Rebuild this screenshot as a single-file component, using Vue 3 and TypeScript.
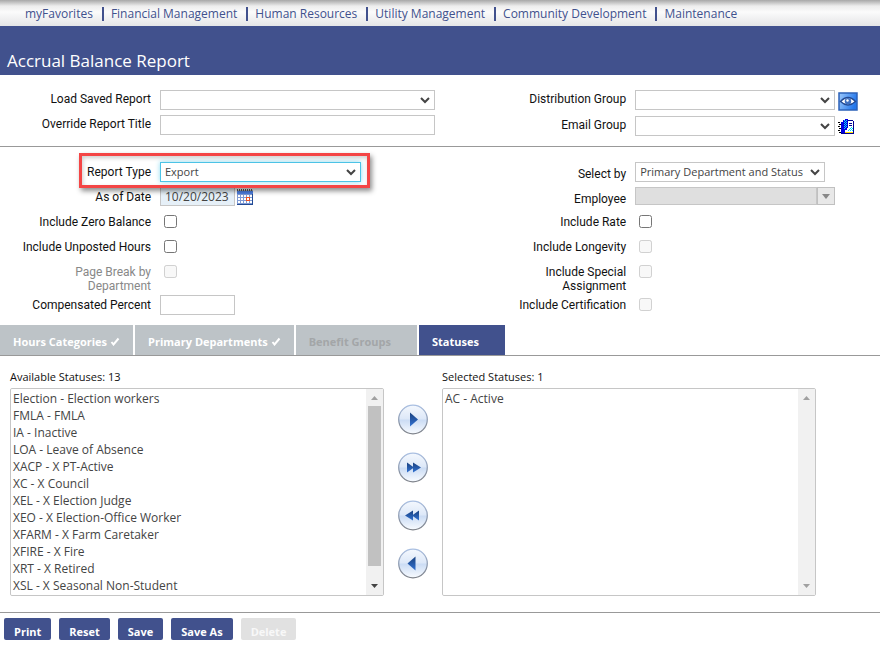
<script setup lang="ts">
import { ref } from 'vue'

const menu = ['myFavorites', 'Financial Management', 'Human Resources', 'Utility Management', 'Community Development', 'Maintenance']

interface Tab { name: string; done?: boolean; disabled?: boolean }
const tabs: Tab[] = [
  { name: 'Hours Categories', done: true },
  { name: 'Primary Departments', done: true },
  { name: 'Benefit Groups', disabled: true },
  { name: 'Statuses' },
]
const activeTab = ref('Statuses')

const available = [
  'Election - Election workers', 'FMLA - FMLA', 'IA - Inactive', 'LOA - Leave of Absence',
  'XACP - X PT-Active', 'XC - X Council', 'XEL - X Election Judge', 'XEO - X Election-Office Worker',
  'XFARM - X Farm Caretaker', 'XFIRE - X Fire', 'XRT - X Retired', 'XSL - X Seasonal Non-Student',
]
const selected = ['AC - Active']

const moves = [
  { id: 'add', d: 'M12 8.5 20 15.5 12 22.5Z' },
  { id: 'add-all', d: 'M9 10.5 16 15.5 9 20.5ZM15 10.5 23 15.5 15 20.5Z' },
  { id: 'remove-all', d: 'M21 10.5 14 15.5 21 20.5ZM15 10.5 7 15.5 15 20.5Z' },
  { id: 'remove', d: 'M17.5 8.5 9.5 15.5 17.5 22.5Z' },
]

const reportType = ref('Export')
const asOfDate = ref('10/20/2023')
const actions = ['Print', 'Reset', 'Save', 'Save As', 'Delete']
</script>

<template>
  <div class="page">
    <nav class="menu">
      <a v-for="m in menu" :key="m" href="#">{{ m }}</a>
    </nav>
    <header class="title"><h1>Accrual Balance Report</h1></header>

    <form @submit.prevent>
      <section class="fields">
        <div class="col">
          <div class="row"><label for="saved">Load Saved Report</label><select id="saved" class="wide"></select></div>
          <div class="row"><label for="override">Override Report Title</label><input id="override" class="wide" type="text"></div>
        </div>
        <div class="col">
          <div class="row">
            <label for="dist">Distribution Group</label><select id="dist" class="mid"></select>
            <button type="button" class="icon eye">
              <svg width="20" height="19" viewBox="0 0 20 19">
                <defs><linearGradient id="eyebg" x1="0" y1="0" x2="1" y2="0.3"><stop offset="0" stop-color="#9cc8fb" /><stop offset="1" stop-color="#2478ec" /></linearGradient></defs>
                <rect x="1" y="1" width="18" height="17" fill="url(#eyebg)" stroke="#2d62b8" stroke-width="1.500" />
                <path d="M2.500 9.500Q10 1.500 17.500 9.500Q10 16.500 2.500 9.500Z" fill="#fff" stroke="#234a93" stroke-width="1.300" />
                <circle cx="10" cy="9.200" r="3.200" fill="#3f70c0" /><circle cx="9.500" cy="8.500" r="1.200" fill="#fff" />
              </svg>
            </button>
          </div>
          <div class="row">
            <label for="email">Email Group</label><select id="email" class="mid"></select>
            <button type="button" class="icon book">
              <svg width="17" height="17" viewBox="0 0 17 17" shape-rendering="crispEdges">
                <path d="M9 3h6v11H9z" fill="#fff" />
                <path d="M10 2h5v1h1v13H3v-1h12V3h-5z" fill="#000090" />
                <path d="M3 4h2V2h2V1h3v9H9v2H7v3H3z" fill="#0000e0" />
                <path d="M6 2h1v1H6zM8 2h1v1H8zM7 3h1v1H7zM6 4h1v1H6zM8 4h1v1H8zM7 5h1v1H7zM6 6h1v1H6zM8 6h1v1H8zM7 7h1v1H7zM6 8h1v1H6zM8 8h1v1H8zM7 9h1v1H7zM6 10h1v1H6z" fill="#00d8ff" />
                <path d="M11 5h3v1h-3zM11 7h3v1h-3z" fill="#000090" />
                <path d="M13 9h1v1h-1zM12 10h1v1h-1zM14 10h1v1h-1zM11 11h1v1h-1zM13 11h1v1h-1zM10 12h1v1h-1zM12 12h1v1h-1zM14 12h1v1h-1z" fill="#00d8ff" />
                <path d="M7 14h8v1H6z" fill="#ffe000" />
                <path d="M0 4h2v1H0zM1 6h2v1H1zM0 8h2v1H0zM1 10h2v1H1zM0 12h2v1H0zM1 14h2v1H1z" fill="#000" />
              </svg>
            </button>
          </div>
        </div>
      </section>

      <section class="fields options">
        <div class="col">
          <div class="row marked"><label for="rtype">Report Type</label><select id="rtype" v-model="reportType" class="type"><option>Export</option></select></div>
          <div class="row">
            <label for="asof">As of Date</label><input id="asof" v-model="asOfDate" class="short date" type="text">
            <button type="button" class="icon cal">
              <svg width="16" height="16" viewBox="0 0 16 16" shape-rendering="crispEdges">
                <path d="M0 1h16v15H0z" fill="#fff" /><path d="M0 2h16v3H0z" fill="#4c7fe0" /><path d="M0 1h16v1H0z" fill="#b4b4b4" />
                <path d="M0 0h1v2H0zM2 0h1v2H2zM4 0h1v2H4zM6 0h1v2H6zM8 0h1v2H8zM10 0h1v2h-1zM12 0h1v2h-1zM14 0h1v2h-1z" fill="#555" />
                <path d="M0 5h16v1H0zM0 8h16v1H0zM0 11h16v1H0zM0 14h16v1H0zM0 5h1v10H0zM3 5h1v10H3zM6 5h1v10H6zM9 5h1v10H9zM12 5h1v10h-1z" fill="#7f9bd4" />
                <path d="M0 15h16v1H0zM15 5h1v11h-1z" fill="#234a93" /><rect x="9.500" y="8.500" width="3" height="3" fill="#fff" stroke="#f0501e" />
              </svg>
            </button>
          </div>
          <div class="row"><label for="zero">Include Zero Balance</label><input id="zero" type="checkbox"></div>
          <div class="row"><label for="unposted">Include Unposted Hours</label><input id="unposted" type="checkbox"></div>
          <div class="row tall"><label for="pbreak" class="muted">Page Break by Department</label><input id="pbreak" type="checkbox" disabled></div>
          <div class="row"><label for="comp">Compensated Percent</label><input id="comp" class="short" type="text"></div>
        </div>
        <div class="col">
          <div class="row low"><label for="selby">Select by</label><select id="selby" class="by"><option>Primary Department and Status</option></select></div>
          <div class="row low">
            <label for="emp">Employee</label>
            <div class="combo mid"><input id="emp" type="text" disabled><button type="button" disabled><svg width="8" height="5"><path d="M0 0h8L4 5z" fill="#888" /></svg></button></div>
          </div>
          <div class="row"><label for="rate">Include Rate</label><input id="rate" type="checkbox"></div>
          <div class="row"><label for="longevity">Include Longevity</label><input id="longevity" type="checkbox" disabled></div>
          <div class="row tall"><label for="special">Include Special Assignment</label><input id="special" type="checkbox" disabled></div>
          <div class="row"><label for="cert">Include Certification</label><input id="cert" type="checkbox" disabled></div>
        </div>
      </section>

      <div class="tabs">
        <button v-for="t in tabs" :key="t.name" type="button" :class="{ active: activeTab === t.name }" :disabled="t.disabled" @click="activeTab = t.name">
          {{ t.name }}<svg width="10" height="9" viewBox="0 0 10 9"><path v-if="t.done" d="M1.500 5 3.500 7.500 8.500 1.500" fill="none" stroke="#fff" stroke-width="2" /></svg>
        </button>
      </div>

      <section class="picker">
        <div class="side">
          <label for="avail">Available Statuses: 13</label>
          <div class="list">
            <select id="avail" multiple><option v-for="s in available" :key="s">{{ s }}</option></select>
            <div class="bar">
              <svg width="7" height="4"><path d="M0 4h7L3.500 0z" fill="#a0a0a0" /></svg>
              <i></i>
              <svg width="7" height="4"><path d="M0 0h7L3.500 4z" fill="#444" /></svg>
            </div>
          </div>
        </div>
        <div class="moves">
          <button v-for="m in moves" :key="m.id" type="button">
            <svg width="30" height="31" viewBox="0 0 30 31">
              <defs>
                <linearGradient id="ball" x1="0" y1="0" x2="0" y2="1"><stop offset="0" stop-color="#f4f8fe" /><stop offset=".48" stop-color="#dde8f8" /><stop offset=".52" stop-color="#cbdcf4" /><stop offset="1" stop-color="#f8fbff" /></linearGradient>
                <linearGradient id="rim" x1="0" y1="0" x2="0" y2="1"><stop offset="0" stop-color="#a9bfe2" /><stop offset="1" stop-color="#7c8088" /></linearGradient>
                <linearGradient id="arrow" x1="0" y1="0" x2="0" y2="1"><stop offset="0" stop-color="#18407f" /><stop offset="1" stop-color="#3272d2" /></linearGradient>
              </defs>
              <circle cx="15" cy="15.500" r="14.300" fill="url(#ball)" stroke="url(#rim)" stroke-width="1.300" />
              <path :d="m.d" fill="url(#arrow)" />
            </svg>
          </button>
        </div>
        <div class="side">
          <label for="sel">Selected Statuses: 1</label>
          <div class="list">
            <select id="sel" multiple><option v-for="s in selected" :key="s">{{ s }}</option></select>
            <div class="bar">
              <svg width="7" height="4"><path d="M0 4h7L3.500 0z" fill="#a0a0a0" /></svg>
              <svg width="7" height="4"><path d="M0 0h7L3.500 4z" fill="#a0a0a0" /></svg>
            </div>
          </div>
        </div>
      </section>

      <footer>
        <button v-for="a in actions" :key="a" type="button" :disabled="a === 'Delete'">{{ a }}</button>
      </footer>
    </form>
  </div>
</template>

<style>
body { margin: 0; background: #fff; }
</style>

<style scoped>
*, *::after { box-sizing: border-box; }
.page { font: 12px/14px "Open Sans", "Noto Sans", sans-serif; color: #444; }
button, input, select { font: inherit; color: inherit; margin: 0; }
button { border: 0; padding: 0; background: none; }
svg { display: block; }

.menu { display: flex; align-items: center; height: 26px; padding: 2px 16px 0; background: linear-gradient(#a8a8a8, #ededed 6px, #fbfbfb 12px, #e4e5e6); }
.menu a { color: #41518d; text-decoration: none; line-height: 14px; padding: 0 9px; white-space: nowrap; }
.menu a + a { border-left: 2px solid #41518d; padding-left: 7px; }
.title { height: 49px; background: #41518d; display: flex; align-items: flex-end; padding: 0 7px 3px; }
h1 { margin: 0; font-size: 17px; line-height: 22px; font-weight: 400; color: #fff; }

.fields { display: grid; grid-template-columns: 27fr 23fr; padding: 15px 0 10px; border-bottom: 1px solid #999; }
.fields:first-child { padding-bottom: 10px; }
.fields:first-child .row label { padding-top: 2px; }
.options { border: 0; }
.col { display: flex; flex-direction: column; gap: 5px; }
.row { position: relative; display: flex; align-items: flex-start; min-height: 20px; }
.row label { width: 151px; margin-right: 9px; padding: 3px 0 0; flex: none; text-align: right; font-family: Roboto, sans-serif; color: #111; }
.row.low label { padding-top: 5px; }
.row label.muted { color: #888; }
.row.tall { height: 28px; }
.row.tall label { padding-left: 50px; }
.row select, .row input[type="text"] { height: 20px; border: 1px solid #c6c6c6; border-radius: 0; background-color: #fff; padding: 0 4px; }
.row select { font-size: 11px; appearance: none; background-image: url("data:image/svg+xml,%3Csvg xmlns='http://www.w3.org/2000/svg' width='10' height='7'%3E%3Cpath d='M1 1l4 4 4-4' fill='none' stroke='%23444' stroke-width='2'/%3E%3C/svg%3E"); background-repeat: no-repeat; background-position: right 4px center; }
.wide { width: 275px; }
.mid { width: 200px; }
.by { width: 190px; }
.row .type { width: 201px; border-color: #4cc3e6; box-shadow: 0 0 5px #8fdcf2; }
.short { width: 75px; }
.row input.date { height: 19px; background-color: #e6f0f8; }
input[type="checkbox"] { width: 13px; height: 13px; margin: 3px 4px; }
.icon { margin: 2px 0 0 3px; }
.icon.cal { margin-left: 2px; }
.marked::after { content: ""; position: absolute; z-index: 1; left: 79px; top: -9px; width: 291px; height: 35px; border: 3px solid #f44545; box-shadow: 2px 3px 5px rgba(0, 0, 0, .45), inset 1px 2px 4px rgba(0, 0, 0, .2); pointer-events: none; }
.combo { display: flex; height: 18px; }
.row .combo input[type="text"] { flex: 1; min-width: 0; height: 18px; background: #dfdfdf; }
.combo button { width: 18px; border: 1px solid #c0c0c0; background: #e8e8e8; display: grid; place-items: center; }

.tabs { display: flex; gap: 2px; border-bottom: 1px solid #999; }
.tabs button { display: flex; align-items: center; gap: 3px; height: 30px; padding: 3px 13px 0; background: #bdc3c7; color: #fff; font-size: 11px; font-weight: 700; white-space: nowrap; }
.tabs button:disabled { color: #a3a6a8; }
.tabs .active { background: #41518d; }

.picker { display: flex; align-items: flex-start; padding: 14px 64px 16px 10px; border-bottom: 1px solid #999; }
.side { flex: 1; min-width: 0; }
.side label { display: block; color: #111; font-size: 11px; margin-bottom: 4px; }
.list { display: flex; height: 208px; border: 1px solid #c6c6c6; border-radius: 2px; }
.list select { flex: 1; min-width: 0; height: 100%; border: 0; outline: 0; padding: 0; background: #fff; overflow: hidden; }
.list option { padding: 1px 2px; line-height: 15px; min-height: 17px; height: 17px; }
.bar { width: 17px; padding: 7px 0; background: #f1f1f1; display: flex; flex-direction: column; align-items: center; justify-content: space-between; }
.bar i { width: 13px; height: 160px; margin: 6px 0 auto; background: #c1c1c1; }
.moves { width: 58px; padding-top: 34px; display: flex; flex-direction: column; align-items: center; gap: 17px; }

footer { display: flex; gap: 8px; padding: 5px 4px 9px; }
footer button { height: 22px; padding: 6px 10px 0; border-radius: 2px; background: #41518d; color: #fff; font-size: 11px; font-weight: 700; }
footer button:disabled { background: #e1e1e1; color: #f8f8f8; }
</style>
